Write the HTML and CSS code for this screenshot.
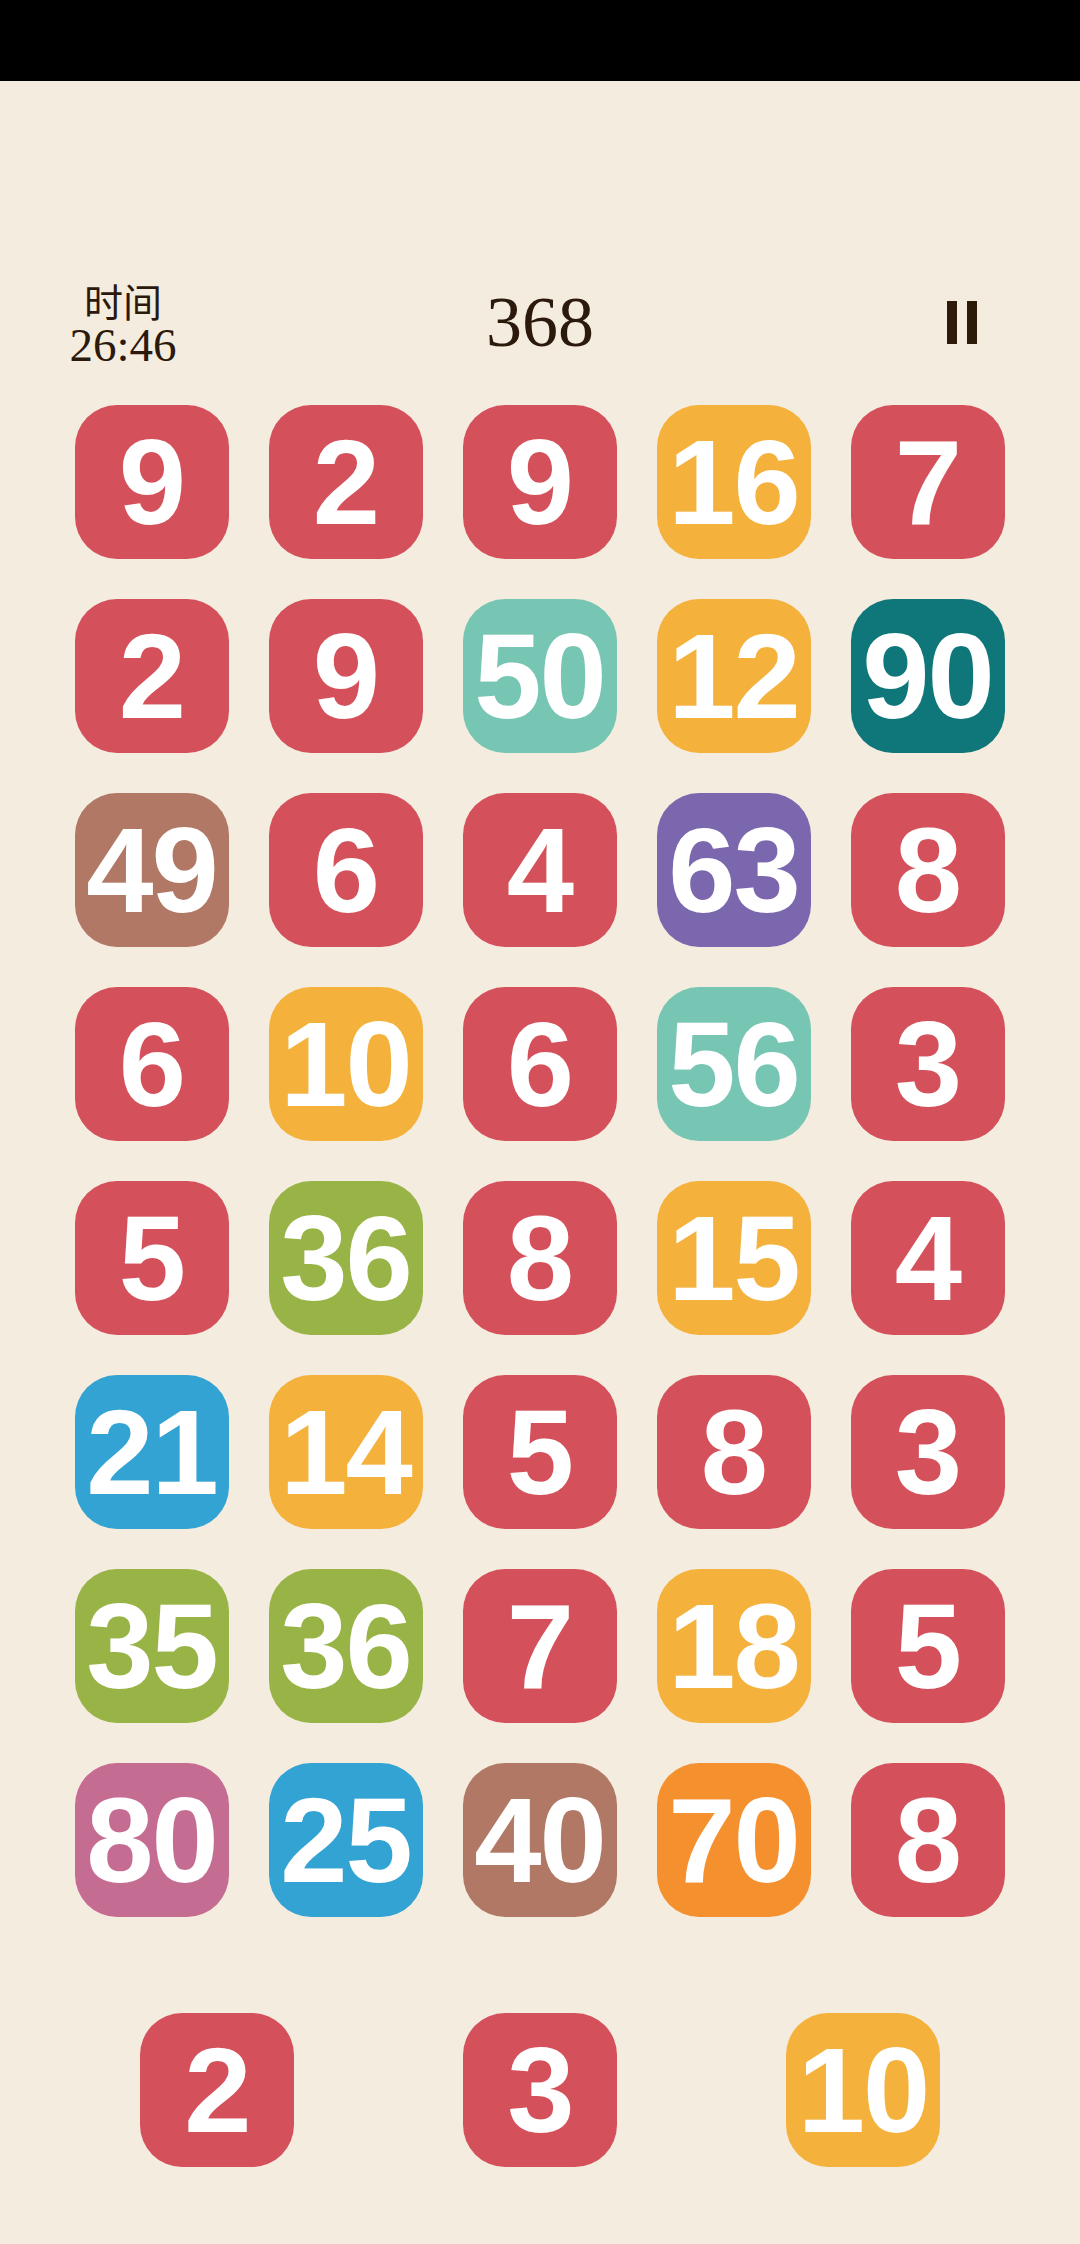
FILE: index.html
```html
<!DOCTYPE html>
<html lang="zh">
<head>
    <meta charset="UTF-8">
    <meta name="viewport" content="width=device-width, initial-scale=1.0">
    <title>数字合并</title>
    <link rel="stylesheet" href="styles.css">
</head>
<body>
    <div class="status-bar"></div>

    <div class="game">
        <div class="topbar">
            <div class="timer">
                <div class="timer-label">时间</div>
                <div class="timer-value">26:46</div>
            </div>
            <div class="score">368</div>
            <button class="pause" aria-label="暂停">
                <span></span><span></span>
            </button>
        </div>

        <div class="board">
            <div class="tile c-red">9</div>
            <div class="tile c-red">2</div>
            <div class="tile c-red">9</div>
            <div class="tile c-yellow">16</div>
            <div class="tile c-red">7</div>

            <div class="tile c-red">2</div>
            <div class="tile c-red">9</div>
            <div class="tile c-mint">50</div>
            <div class="tile c-yellow">12</div>
            <div class="tile c-teal">90</div>

            <div class="tile c-brown">49</div>
            <div class="tile c-red">6</div>
            <div class="tile c-red">4</div>
            <div class="tile c-purple">63</div>
            <div class="tile c-red">8</div>

            <div class="tile c-red">6</div>
            <div class="tile c-yellow">10</div>
            <div class="tile c-red">6</div>
            <div class="tile c-mint">56</div>
            <div class="tile c-red">3</div>

            <div class="tile c-red">5</div>
            <div class="tile c-green">36</div>
            <div class="tile c-red">8</div>
            <div class="tile c-yellow">15</div>
            <div class="tile c-red">4</div>

            <div class="tile c-blue">21</div>
            <div class="tile c-yellow">14</div>
            <div class="tile c-red">5</div>
            <div class="tile c-red">8</div>
            <div class="tile c-red">3</div>

            <div class="tile c-green">35</div>
            <div class="tile c-green">36</div>
            <div class="tile c-red">7</div>
            <div class="tile c-yellow">18</div>
            <div class="tile c-red">5</div>

            <div class="tile c-pink">80</div>
            <div class="tile c-blue">25</div>
            <div class="tile c-brown">40</div>
            <div class="tile c-orange">70</div>
            <div class="tile c-red">8</div>
        </div>

        <div class="next-row">
            <div class="tile c-red">2</div>
            <div class="tile c-red">3</div>
            <div class="tile c-yellow">10</div>
        </div>
    </div>
</body>
</html>
```

FILE: styles.css
```css
body {
    margin: 0;
    background: #f5ece0;
    color: #2b1a0c;
    font-family: "Liberation Serif", "Noto Sans CJK SC", serif;
}
.status-bar {
    height: 81px;
    background: #000;
}
.game {
    width: 1080px;
}
/* header: timer, score, pause */
.topbar {
    display: grid;
    grid-template-columns: 1fr auto 1fr;
    align-items: center;
    height: 92px;
    margin-top: 195px;
    padding: 0 69px;
}
.timer {
    width: 108px;
    text-align: center;
    justify-self: start;
}
.timer-label {
    font-family: "Noto Sans CJK SC", sans-serif;
    font-size: 39px;
    line-height: 46px;
}
.timer-value {
    font-size: 47px;
    line-height: 44px;
}
.score {
    font-size: 72px;
    line-height: 80px;
}
.pause {
    justify-self: end;
    display: flex;
    gap: 10px;
    padding: 0;
    border: 0;
    background: none;
    margin: 0 34px 0 0;
}
.pause span {
    width: 10px;
    height: 43px;
    background: #2d1a08;
}
/* tiles */
.board {
    display: grid;
    grid-template-columns: repeat(5, 154px);
    gap: 40px;
    justify-content: center;
    margin-top: 37px;
    padding-right: 1px;
}
.tile {
    width: 154px;
    height: 154px;
    border-radius: 42px;
    display: flex;
    align-items: center;
    justify-content: center;
    color: #fff;
    font-family: "Liberation Sans", Arial, sans-serif;
    font-weight: bold;
    font-size: 121px;
    letter-spacing: -2px;
    line-height: 1;
}
.next-row {
    display: flex;
    justify-content: center;
    gap: 169px;
    margin-top: 96px;
}
.c-red { background: #d4515b; }
.c-yellow { background: #f4b13b; }
.c-mint { background: #77c5b3; }
.c-teal { background: #0f7679; }
.c-brown { background: #b07865; }
.c-purple { background: #7b67ae; }
.c-green { background: #99b446; }
.c-blue { background: #33a3d3; }
.c-pink { background: #c56c92; }
.c-orange { background: #f5902f; }
```
